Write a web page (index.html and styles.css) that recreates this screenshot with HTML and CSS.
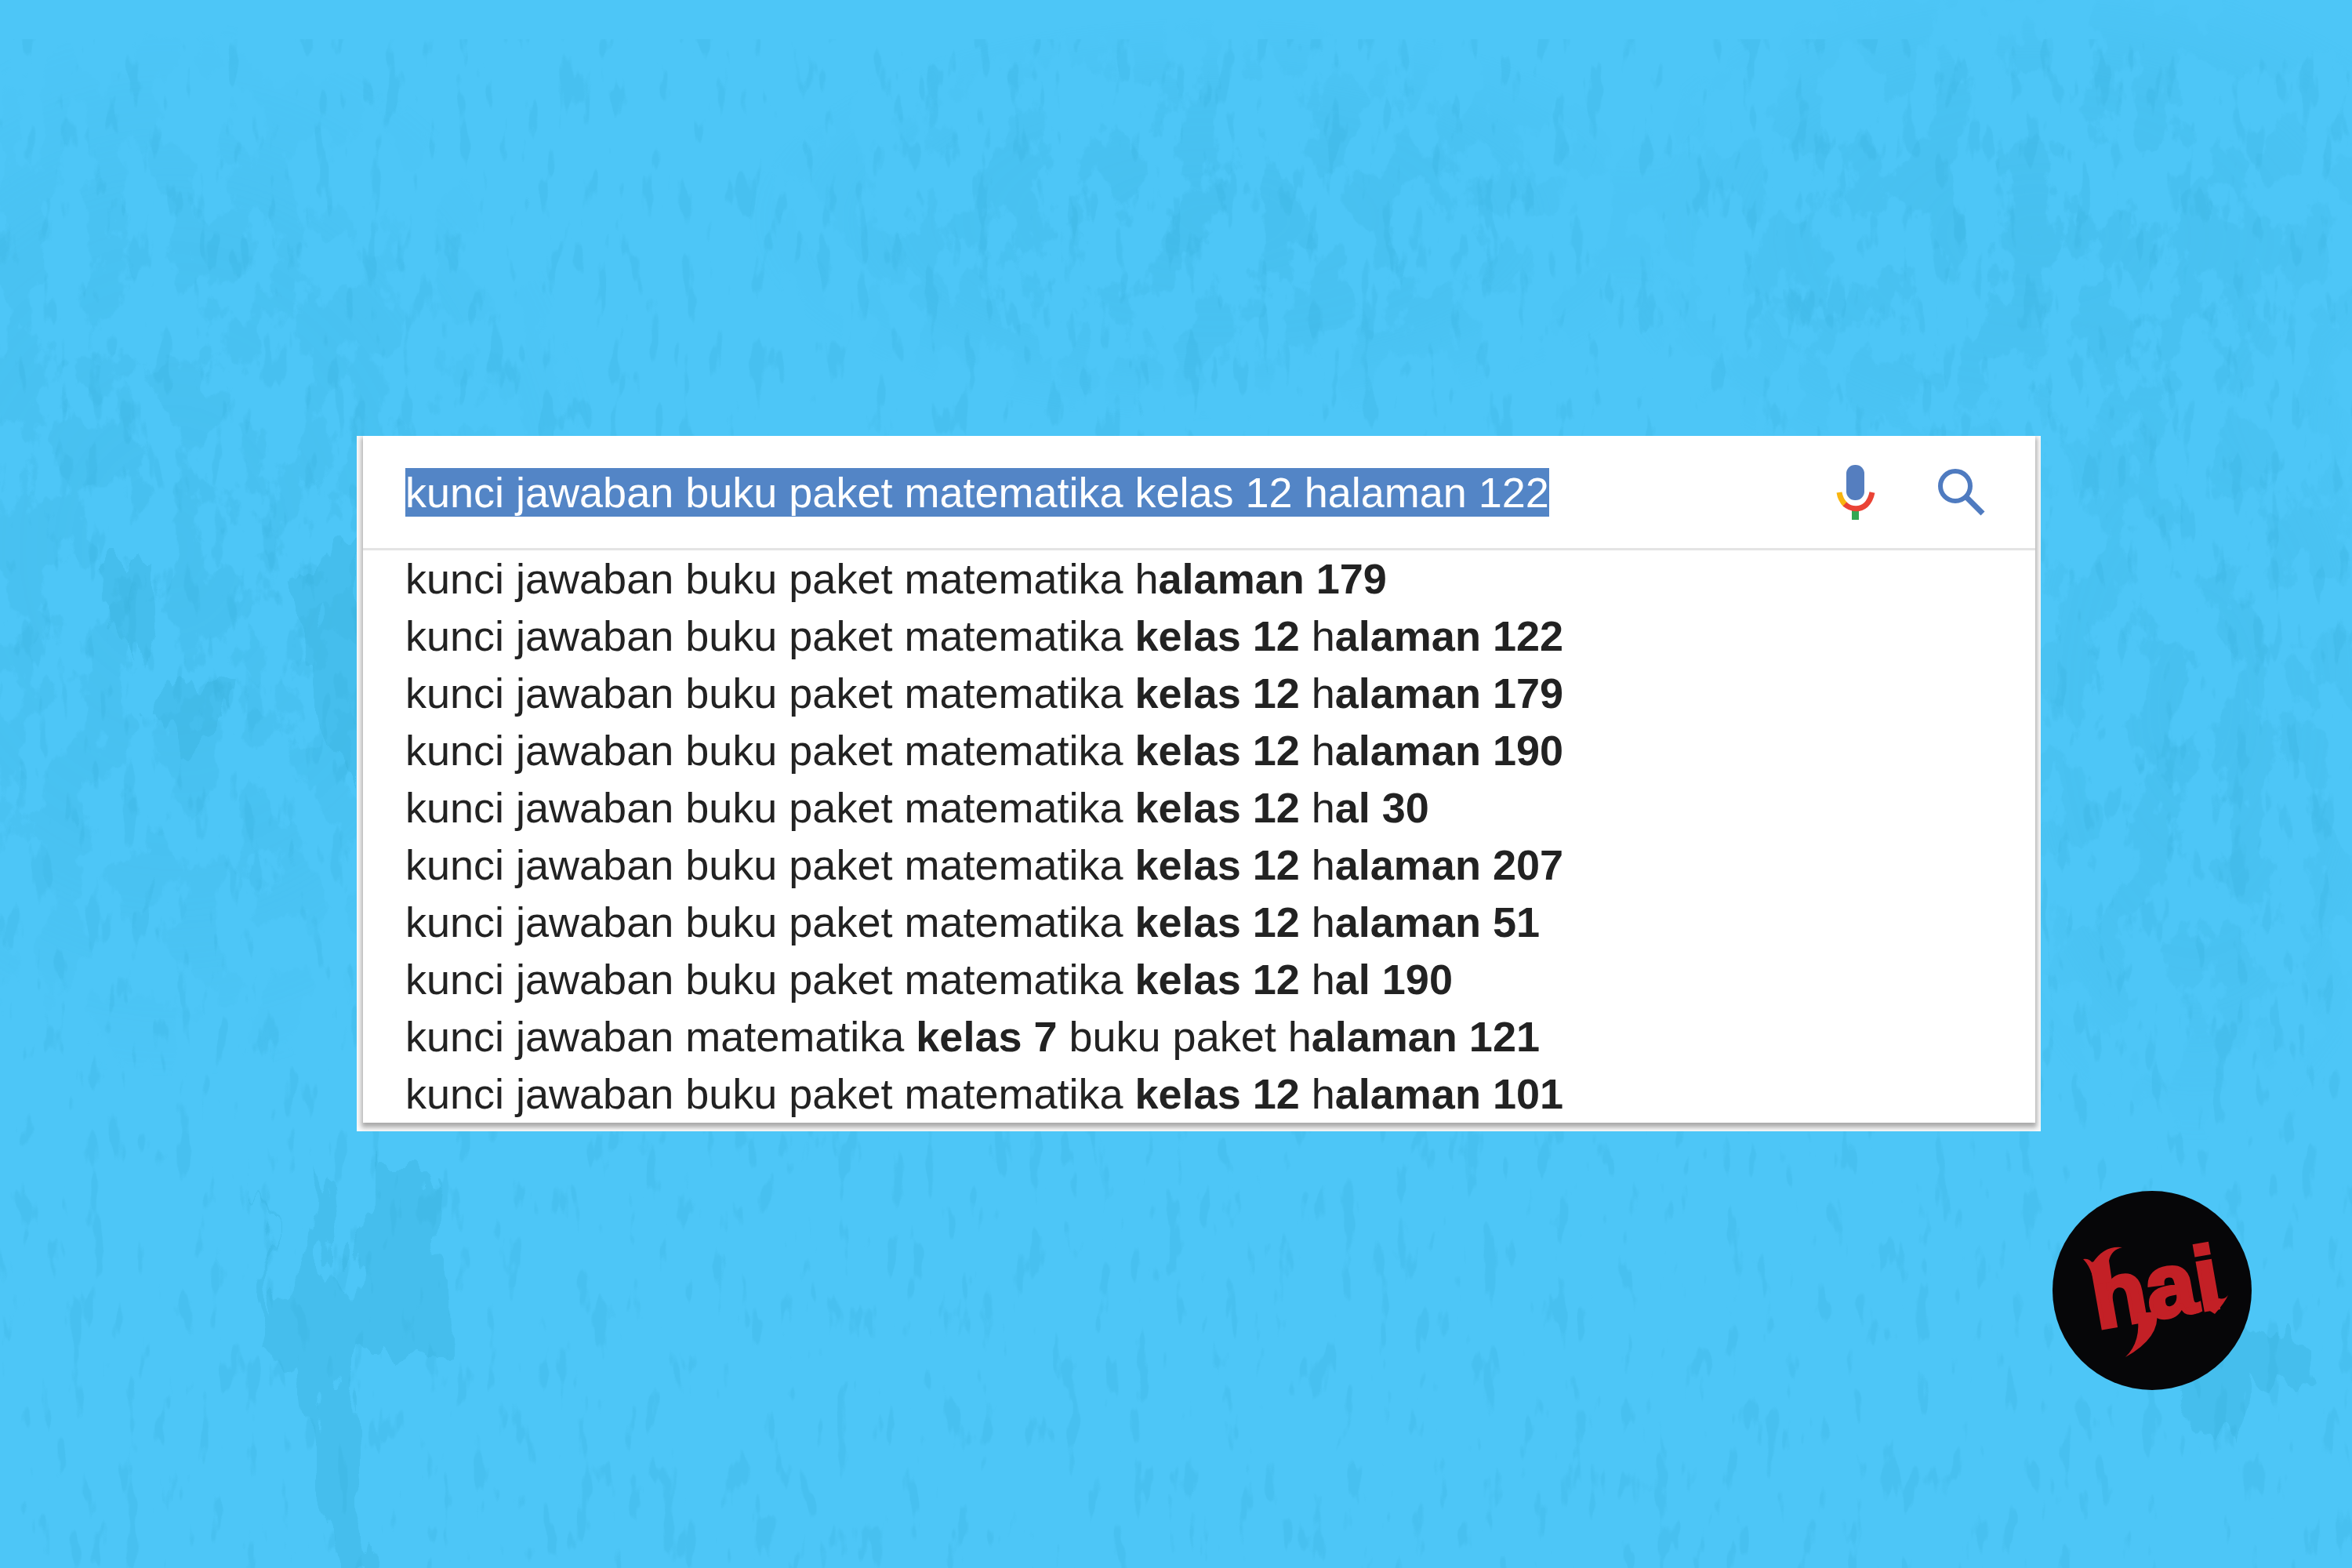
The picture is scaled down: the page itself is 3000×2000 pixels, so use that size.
FILE: index.html
```html
<!DOCTYPE html>
<html lang="id">
<head>
  <meta charset="UTF-8">
  <title>Kunci jawaban</title>
  <link rel="stylesheet" href="styles.css">
</head>
<body>

  <!-- background texture -->
  <svg class="texture" viewBox="0 0 3000 2000" preserveAspectRatio="xMidYMid slice" aria-hidden="true">
    <defs>
      <filter id="strokes" x="0" y="0" width="100%" height="100%" color-interpolation-filters="sRGB">
        <feTurbulence type="fractalNoise" baseFrequency="0.045 0.014" numOctaves="3" seed="8"/>
        <feColorMatrix values="0 0 0 0 0.19  0 0 0 0 0.66  0 0 0 0 0.82  14 0 0 0 -8.8"/>
        <feComposite in2="SourceGraphic" operator="in"/>
      </filter>
      <filter id="patches" x="0" y="0" width="100%" height="100%" color-interpolation-filters="sRGB">
        <feTurbulence type="fractalNoise" baseFrequency="0.018 0.011" numOctaves="5" seed="3"/>
        <feColorMatrix values="0 0 0 0 0.19  0 0 0 0 0.66  0 0 0 0 0.82  0 22 0 0 -11"/>
        <feComposite in2="SourceGraphic" operator="in"/>
      </filter>
      <filter id="rough" x="-10%" y="-10%" width="120%" height="120%" color-interpolation-filters="sRGB">
        <feTurbulence type="fractalNoise" baseFrequency="0.03 0.009" numOctaves="3" seed="5"/>
        <feDisplacementMap in="SourceGraphic" scale="90" xChannelSelector="R" yChannelSelector="G"/>
      </filter>
      <radialGradient id="fade">
        <stop offset="0" stop-color="#000"/>
        <stop offset="0.6" stop-color="#000" stop-opacity="0.7"/>
        <stop offset="1" stop-color="#000" stop-opacity="0"/>
      </radialGradient>
    </defs>
    <rect y="50" width="3000" height="1950" filter="url(#strokes)" opacity="0.18"/>
    <g filter="url(#patches)" opacity="0.2">
      <ellipse cx="220" cy="700" rx="560" ry="680" fill="url(#fade)"/>
      <ellipse cx="2600" cy="300" rx="560" ry="340" fill="url(#fade)"/>
      <ellipse cx="1550" cy="280" rx="600" ry="260" fill="url(#fade)"/>
      <ellipse cx="2800" cy="900" rx="300" ry="560" fill="url(#fade)"/>
    </g>
    <g class="blots" filter="url(#rough)">
      <path d="M330 1460 350 1680 395 1600 410 1480 425 1630 455 1660 470 1480 520 1560 540 1600 570 1620 580 1720 470 1720 440 1760 450 1920 480 2000 440 2000 410 1900 390 1760 320 1720 340 1640z"/>
      <path d="M410 1380 470 1500 560 1500 550 1640 510 1580z"/>
      <path d="M2780 1730 2860 1690 2940 1720 2950 1770 2870 1760 2860 1840 2800 1830z"/>
      <path d="M120 720 190 720 200 800 170 860z"/>
      <path d="M180 900 300 850 290 930 220 960z"/>
      <path d="M380 740 455 680 455 1000 410 930z"/>
    </g>
  </svg>

  <main class="page">
    <form class="search">
      <div class="search-box">
        <div class="search-bar">
          <input type="text" id="query" class="query" aria-label="Cari" autocomplete="off" spellcheck="false" value="kunci jawaban buku paket matematika kelas 12 halaman 122">
          <button type="button" class="icon-button" aria-label="Cari dengan suara">
            <svg width="50" height="70" viewBox="0 0 50 70">
              <path d="M20 57h9v13h-9z" fill="#34a853"/>
              <rect x="13" y="0" width="23" height="45" rx="11" fill="#557ebf"/>
              <path d="M4 35C5 42 8 47 12 51" fill="none" stroke="#f9b50f" stroke-width="7"/>
              <path d="M11 50C20 58 31 57 38 51Q44 45 46 35" fill="none" stroke="#ea4335" stroke-width="7"/>
            </svg>
          </button>
          <button type="button" class="icon-button" aria-label="Cari">
            <svg width="60" height="60" viewBox="0 0 60 60">
              <circle cx="22" cy="22" r="19" fill="none" stroke="#4f7bc0" stroke-width="6"/>
              <path d="M36 36 57 57" stroke="#4f7bc0" stroke-width="7"/>
            </svg>
          </button>
        </div>
        <ul class="suggestions">
          <li>kunci jawaban buku paket matematika h<b>alaman 179</b></li>
          <li>kunci jawaban buku paket matematika <b>kelas 12</b> h<b>alaman 122</b></li>
          <li>kunci jawaban buku paket matematika <b>kelas 12</b> h<b>alaman 179</b></li>
          <li>kunci jawaban buku paket matematika <b>kelas 12</b> h<b>alaman 190</b></li>
          <li>kunci jawaban buku paket matematika <b>kelas 12</b> h<b>al 30</b></li>
          <li>kunci jawaban buku paket matematika <b>kelas 12</b> h<b>alaman 207</b></li>
          <li>kunci jawaban buku paket matematika <b>kelas 12</b> h<b>alaman 51</b></li>
          <li>kunci jawaban buku paket matematika <b>kelas 12</b> h<b>al 190</b></li>
          <li>kunci jawaban matematika <b>kelas 7</b> buku paket h<b>alaman 121</b></li>
          <li>kunci jawaban buku paket matematika <b>kelas 12</b> h<b>alaman 101</b></li>
        </ul>
      </div>
    </form>

    <svg class="logo" viewBox="0 0 254 254" role="img" aria-label="hai">
      <circle cx="127" cy="127" r="127" fill="#060608"/>
      <g fill="#c32026">
        <text class="logo-text" transform="translate(57 176) rotate(-10)">hai</text>
        <!-- flourishes -->
        <path d="M39 87Q47 86 51 92Q66 69 89 72Q75 75 72 89L76 116 54 120Q49 96 39 87z"/>
        <path d="M108 156 133 154Q138 187 93 212Q114 192 108 156z"/>
        <path d="M164 150 188 146 182 157 175 150z"/>
        <path d="M194 142 213 137Q219 139 224 133Q220 142 207 157L196 150z"/>
      </g>
    </svg>
  </main>

  <script>
    // the query starts selected
    const query = document.getElementById("query");
    query.focus();
    query.select();
  </script>

</body>
</html>
```
FILE: styles.css
```css
* {
  box-sizing: border-box;
}
body {
  margin: 0;
  min-height: 100vh;
  background-color: #4dc6f7;
  color: #222;
  font-family: Arial, "Liberation Sans", sans-serif;
  font-size: 54px;
}
.texture {
  position: absolute;
  top: 0;
  left: 0;
  width: 100%;
  height: 100%;
}
.blots {
  fill: #30a9d1;
  opacity: 0.24;
}
.page {
  position: relative;
  display: flex;
  flex-direction: column;
  padding: 556px 128px 0 455px;
}
.search {
  margin-right: 269px;
  padding: 0 7px 11px 8px;
  background-color: #fafafa;
  overflow: hidden;
}
.search-box {
  background-color: #fff;
  box-shadow: 0 4px 6px 2px #aaa;
}
.search-bar {
  display: flex;
  align-items: center;
  height: 146px;
  padding: 0 64px 0 54px;
  border-bottom: 3px solid #e4e4e4;
}
.query {
  flex: 1;
  min-width: 0;
  padding: 0;
  border: none;
  outline: none;
  background: none;
  color: #222;
  font: inherit;
}
.query::selection {
  background-color: #5385c6;
  color: #fff;
}
.icon-button {
  display: flex;
  padding: 0;
  border: none;
  background: none;
  cursor: pointer;
}
.icon-button + .icon-button {
  margin-left: 80px;
}
.suggestions {
  margin: 0;
  padding: 0 54px;
  list-style: none;
  line-height: 73px;
}
.suggestions li {
  white-space: nowrap;
}
.logo {
  align-self: flex-end;
  width: 254px;
  margin-top: 76px;
}
.logo-text {
  font-size: 114px;
  font-weight: bold;
  stroke: #c32026;
  stroke-width: 5px;
}
```
